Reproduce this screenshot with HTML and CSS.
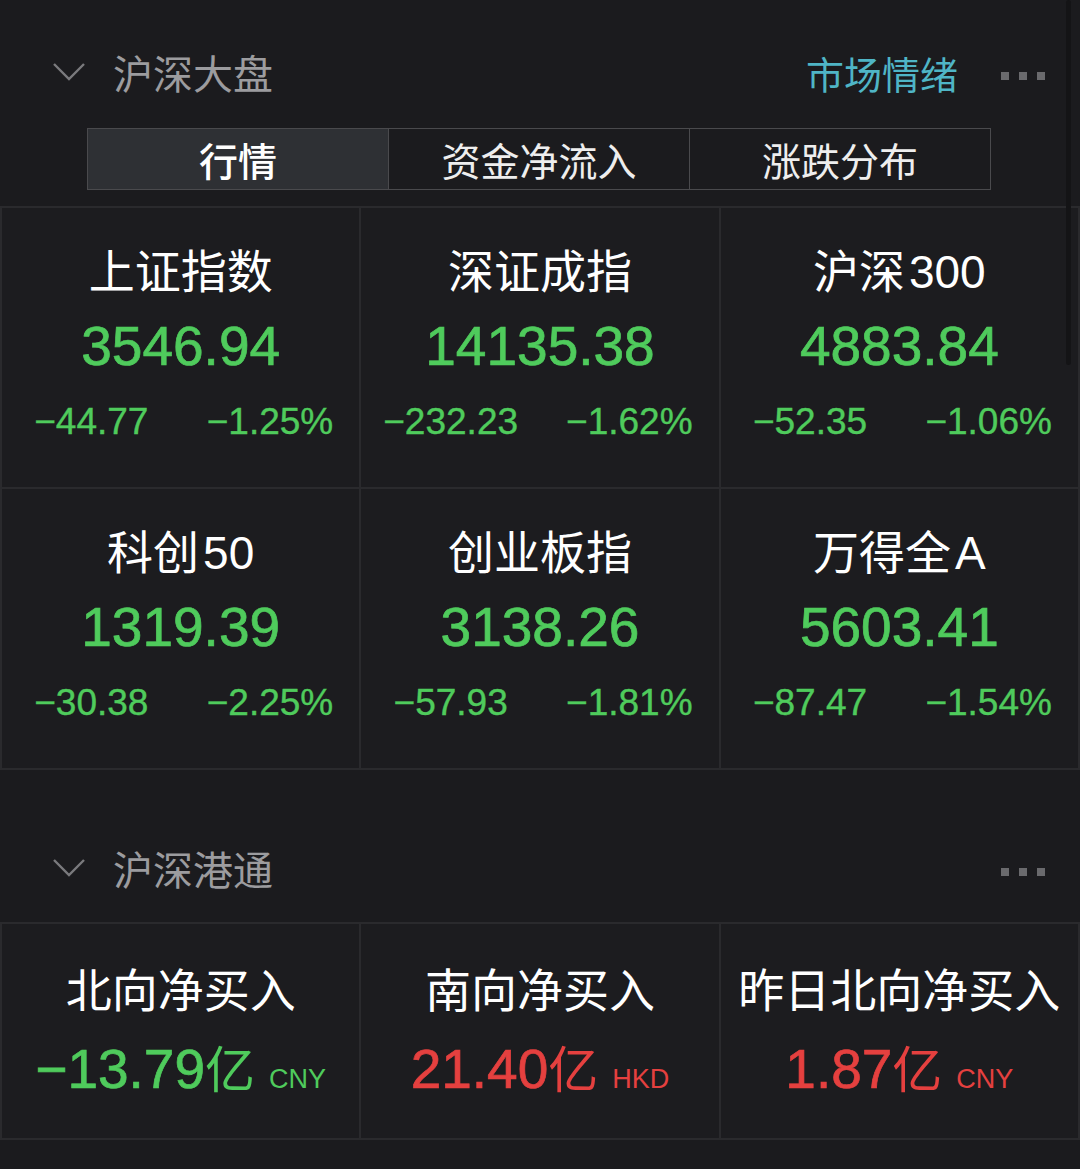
FILE: index.html
```html
<!DOCTYPE html>
<html lang="zh-CN">
<head>
    <meta charset="UTF-8">
    <meta name="viewport" content="width=device-width, initial-scale=1.0">
    <title>沪深大盘</title>
    <link rel="stylesheet" href="styles.css">
</head>
<body>

    <div class="scrollbar"></div>

    <div class="section-head first">
        <svg class="chevron" width="34" height="20" viewBox="0 0 34 20"><path d="M2 2 L17 17 L32 2" fill="none" stroke="#7a7a7d" stroke-width="2.4"/></svg>
        <span class="section-title">沪深大盘</span>
        <span class="head-link">市场情绪</span>
        <span class="more"><i></i><i></i><i></i></span>
    </div>

    <div class="tabs">
        <div class="tab active">行情</div>
        <div class="tab">资金净流入</div>
        <div class="tab">涨跌分布</div>
    </div>

    <div class="grid">
        <div class="cell">
            <div class="label">上证指数</div>
            <div class="value green">3546.94</div>
            <div class="changes green"><span>−44.77</span><span>−1.25%</span></div>
        </div>
        <div class="cell">
            <div class="label">深证成指</div>
            <div class="value green">14135.38</div>
            <div class="changes green"><span>−232.23</span><span>−1.62%</span></div>
        </div>
        <div class="cell">
            <div class="label">沪深<span class="num">300</span></div>
            <div class="value green">4883.84</div>
            <div class="changes green"><span>−52.35</span><span>−1.06%</span></div>
        </div>
        <div class="cell">
            <div class="label">科创<span class="num">50</span></div>
            <div class="value green">1319.39</div>
            <div class="changes green"><span>−30.38</span><span>−2.25%</span></div>
        </div>
        <div class="cell">
            <div class="label">创业板指</div>
            <div class="value green">3138.26</div>
            <div class="changes green"><span>−57.93</span><span>−1.81%</span></div>
        </div>
        <div class="cell">
            <div class="label">万得全<span class="num">A</span></div>
            <div class="value green">5603.41</div>
            <div class="changes green"><span>−87.47</span><span>−1.54%</span></div>
        </div>
    </div>

    <div class="section-head second">
        <svg class="chevron" width="34" height="20" viewBox="0 0 34 20"><path d="M2 2 L17 17 L32 2" fill="none" stroke="#7a7a7d" stroke-width="2.4"/></svg>
        <span class="section-title">沪深港通</span>
        <span class="more"><i></i><i></i><i></i></span>
    </div>

    <div class="grid flow">
        <div class="cell">
            <div class="label">北向净买入</div>
            <div class="value green">−13.79<span class="unit">亿</span><span class="cur">CNY</span></div>
        </div>
        <div class="cell">
            <div class="label">南向净买入</div>
            <div class="value red">21.40<span class="unit">亿</span><span class="cur">HKD</span></div>
        </div>
        <div class="cell">
            <div class="label">昨日北向净买入</div>
            <div class="value red">1.87<span class="unit">亿</span><span class="cur">CNY</span></div>
        </div>
    </div>

</body>
</html>
```

FILE: styles.css
```css
body {
    margin: 0;
    background-color: #1b1b1e;
    font-family: "Liberation Sans", "Noto Sans CJK SC", sans-serif;
    color: #fff;
    position: relative;
    overflow: hidden;
}

.scrollbar {
    position: absolute;
    top: 0;
    right: 9px;
    width: 5px;
    height: 365px;
    border-radius: 3px;
    background-color: #141416;
}

.section-head {
    display: flex;
    align-items: center;
    height: 56px;
    padding: 0 35px 0 52px;
}
.section-head.first {
    padding-top: 44px;
}
.section-head.second {
    margin-top: 70px;
}
.chevron {
    margin-right: 27px;
}
.section-title {
    font-family: "Noto Sans CJK SC", sans-serif;
    font-size: 40px;
    color: #9c9c9f;
}
.head-link {
    margin-left: auto;
    font-family: "Noto Sans CJK SC", sans-serif;
    font-size: 38px;
    color: #4fb5c6;
}
.more {
    display: flex;
    gap: 10px;
    margin: 8px 0 0 43px;
}
.second .more {
    margin-left: auto;
}
.more i {
    width: 8px;
    height: 8px;
    background-color: #6a6a6d;
}

.tabs {
    display: flex;
    margin: 28px 89px 16px 87px;
    border: 1px solid #4a4a4d;
}
.tab {
    flex: 1;
    height: 60px;
    line-height: 60px;
    text-align: center;
    font-family: "Noto Sans CJK SC", sans-serif;
    font-size: 39px;
    color: #eee;
}
.tab + .tab {
    border-left: 1px solid #4a4a4d;
}
.tab.active {
    background-color: #2e3034;
    color: #fff;
    font-weight: 500;
}

.grid {
    display: grid;
    grid-template-columns: repeat(3, 1fr);
    gap: 2px;
    padding: 2px;
    background-color: #2a2a2d;
}
.grid.flow {
    margin-top: 26px;
}
.cell {
    background-color: #1c1c1f;
    padding: 32px 0 40px;
    text-align: center;
}
.flow .cell {
    padding: 35px 0 37px;
}
.label {
    height: 56px;
    line-height: 56px;
    font-size: 46px;
    font-family: "Noto Sans CJK SC", sans-serif;
    color: #fff;
    white-space: nowrap;
}
.label .num {
    font-family: "Liberation Sans", sans-serif;
    margin-left: 4px;
}
.value {
    height: 70px;
    line-height: 70px;
    margin-top: 15px;
    font-size: 55px;
    white-space: nowrap;
    -webkit-text-stroke: 0.7px currentColor;
}
.flow .value {
    margin-top: 16px;
}
.unit {
    font-family: "Noto Sans CJK SC", sans-serif;
    font-size: 50px;
    -webkit-text-stroke: 0;
}
.cur {
    font-size: 27px;
    margin-left: 14px;
    -webkit-text-stroke: 0;
}
.changes {
    display: flex;
    height: 50px;
    line-height: 50px;
    margin-top: 16px;
    font-size: 37px;
    -webkit-text-stroke: 0.4px currentColor;
}
.changes span {
    flex: 1;
}
.green {
    color: #4fcb5c;
}
.red {
    color: #e5403f;
}
```
